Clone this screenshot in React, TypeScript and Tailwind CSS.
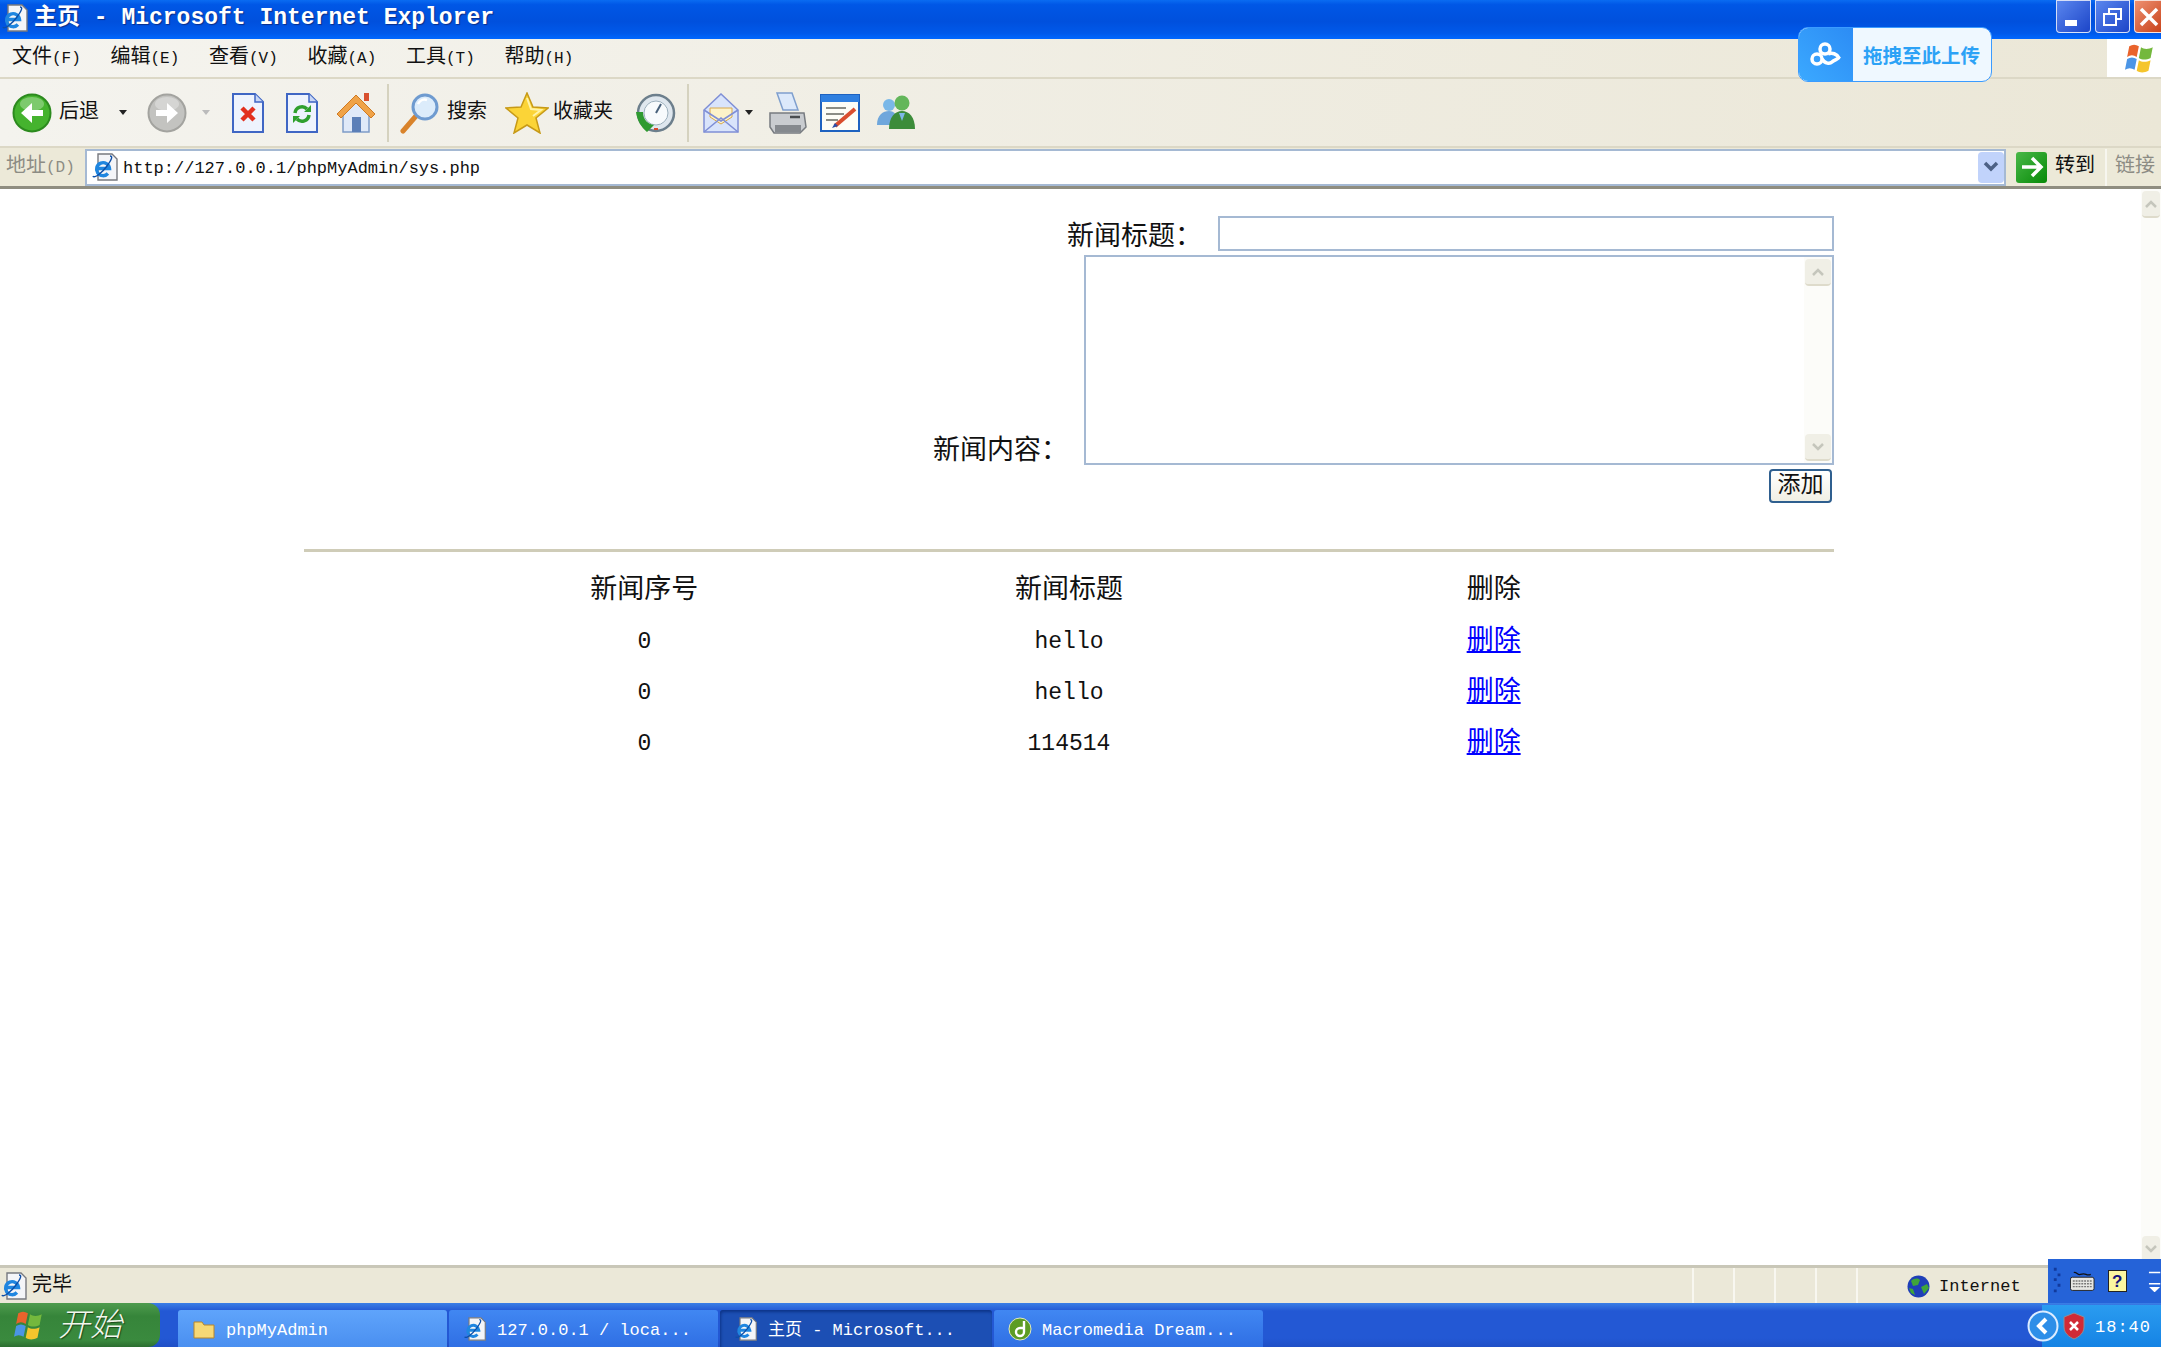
const CJK = "font-['Liberation_Mono','Noto_Sans_CJK_SC',monospace]";

function ArrowOrb({ color, dark, flip }: { color: string; dark: string; flip?: boolean }) {
  return (
    <svg width="40" height="40" viewBox="0 0 40 40" aria-hidden>
      <circle cx="20" cy="20" r="18.5" fill={color} stroke={dark} strokeWidth="2" />
      <ellipse cx="20" cy="11" rx="12" ry="7" fill="#fff" opacity="0.3" />
      <path
        d={flip ? 'M9 17h11v-7l11 10-11 10v-7H9z' : 'M31 17H20v-7L9 20l11 10v-7h11z'}
        fill="#fff"
      />
    </svg>
  );
}

function DocIcon({ children }: { children: React.ReactNode }) {
  return (
    <svg width="34" height="40" viewBox="0 0 34 40" aria-hidden>
      <path d="M2 1h22l8 8v30H2z" fill="#eef3fd" stroke="#3f66c4" strokeWidth="2" />
      <path d="M24 1v8h8" fill="#c8d6f5" stroke="#3f66c4" strokeWidth="1.5" />
      {children}
    </svg>
  );
}

function IeDoc({ size = 28 }: { size?: number }) {
  return (
    <svg width={size} height={size} viewBox="0 0 28 28" aria-hidden>
      <path d="M7 1h14l5 5v21H7z" fill="#f4f5f8" stroke="#77797f" strokeWidth="1.4" />
      <path
        d="M6 15.5h12.5a6.5 6.5 0 1 0-1.6 5"
        fill="none"
        stroke="#1f86e0"
        strokeWidth="3.4"
      />
      <path d="M2 23c1 3 9-3 14-10s6-10 3-10" fill="none" stroke="#0d4fa8" strokeWidth="1.4" />
    </svg>
  );
}

function HomeIcon() {
  return (
    <svg width="40" height="42" viewBox="0 0 40 42" aria-hidden>
      <path d="M7 20v20h26V20L20 8z" fill="#dfe9f8" stroke="#7f9cc8" strokeWidth="1.5" />
      <path d="M1 22 20 3l19 19-4 4L20 11 5 26z" fill="#f0a348" stroke="#cf7a22" strokeWidth="1" />
      <rect x="28" y="1" width="5" height="8" fill="#d8502e" />
      <rect x="16" y="25" width="9" height="15" fill="#5b7fb8" />
    </svg>
  );
}

function SearchIcon() {
  return (
    <svg width="42" height="42" viewBox="0 0 42 42" aria-hidden>
      <path d="M4 39 17 24" stroke="#d9832b" strokeWidth="5" strokeLinecap="round" />
      <circle cx="26" cy="15" r="12" fill="#dcecfb" stroke="#6f9bd0" strokeWidth="3" />
      <path d="M19 12c2-4 6-5 9-4" fill="none" stroke="#fff" strokeWidth="2.5" />
    </svg>
  );
}

function StarIcon() {
  return (
    <svg width="44" height="42" viewBox="0 0 44 42" aria-hidden>
      <path
        d="M22 1l6 14 15 1-12 10 4 15-13-8-13 8 4-15L1 16l15-1z"
        fill="#fbd437"
        stroke="#c79a18"
        strokeWidth="1.5"
      />
      <path d="M22 6l4 11 10 1-8 6" fill="none" stroke="#fff3a8" strokeWidth="2" />
    </svg>
  );
}

function HistoryIcon() {
  return (
    <svg width="42" height="42" viewBox="0 0 42 42" aria-hidden>
      <circle cx="22" cy="21" r="18" fill="#dfe7ee" stroke="#6d7f8c" strokeWidth="2.5" />
      <circle cx="22" cy="21" r="12" fill="#f7fafc" stroke="#9db0bd" />
      <path d="M22 21l5-9" stroke="#47607a" strokeWidth="2" />
      <path d="M2 20h7c0 8 5 12 11 13l-7 7C7 35 3 28 2 20z" fill="#2f9a30" />
      <path d="M20 37h4" stroke="#d9472b" strokeWidth="2" />
    </svg>
  );
}

function MailIcon() {
  return (
    <svg width="36" height="40" viewBox="0 0 36 40" aria-hidden>
      <path d="M1 17 18 1l17 16v22H1z" fill="#d9e4fb" stroke="#7f8fd6" strokeWidth="1.5" />
      <path d="M7 15h22v9l-11 7-11-7z" fill="#fdf3c9" stroke="#d8a84c" />
      <path d="M1 39l17-14 17 14M1 17l17 11 17-11" fill="none" stroke="#7f8fd6" strokeWidth="1.5" />
    </svg>
  );
}

function PrinterIcon() {
  return (
    <svg width="40" height="42" viewBox="0 0 40 42" aria-hidden>
      <path d="M9 1h15l6 17H15z" fill="#dce9fb" stroke="#7f9fce" strokeWidth="1.5" />
      <path d="M2 21h34l2 14-6 6H6l-4-6z" fill="#c9ccd0" stroke="#777b80" strokeWidth="1.5" />
      <path d="M7 33h26v7H7z" fill="#85898e" />
      <path d="M22 25h10" stroke="#4a4d51" strokeWidth="2.5" />
    </svg>
  );
}

function EditIcon() {
  return (
    <svg width="40" height="38" viewBox="0 0 40 38" aria-hidden>
      <rect x="1" y="1" width="38" height="36" fill="#fdfdf6" stroke="#1e62c0" strokeWidth="2" />
      <rect x="1" y="1" width="38" height="7" fill="#2f7fe0" />
      <path d="M6 14h20M6 20h18M6 26h12" stroke="#8b8d85" strokeWidth="2" />
      <path d="M15 32 35 15" stroke="#d94e2e" strokeWidth="4" />
      <path d="M12 34l3-5 3 3z" fill="#2a4fa8" />
    </svg>
  );
}

function MessengerIcon() {
  return (
    <svg width="42" height="36" viewBox="0 0 42 36" aria-hidden>
      <circle cx="14" cy="10" r="6" fill="#7ab8e8" />
      <path d="M2 30c0-10 6-14 12-14s8 4 8 14z" fill="#6fa7dc" />
      <circle cx="27" cy="8" r="7.5" fill="#63b65a" />
      <path d="M14 34c0-12 6-18 13-18s13 6 13 18z" fill="#3c8c3a" />
      <path d="M24 18l3 8 3-8" fill="#7fb8e6" />
    </svg>
  );
}

function XpFlag({ size }: { size: number }) {
  return (
    <svg width={size} height={size} viewBox="0 0 30 30" aria-hidden>
      <path d="M4 4c3-2 6-2 9 0l-2 10c-3-2-6-2-9 0z" fill="#e9632c" />
      <path d="M15 5c3 2 7 2 11 0l-2 10c-4 2-8 2-11 0z" fill="#74b83d" />
      <path d="M2 16c3-2 6-2 9 0l-2 10c-3-2-6-2-9 0z" fill="#4b95e6" />
      <path d="M13 17c3 2 7 2 11 0l-2 10c-4 2-8 2-11 0z" fill="#f5c52d" />
    </svg>
  );
}

function ScrollButton({ up, h = 'h-[27px]' }: { up?: boolean; h?: string }) {
  return (
    <div
      className={`flex ${h} w-full items-center justify-center rounded-sm border-b-2 border-[#dedbcb] bg-[#f0efe6]`}
    >
      <svg width="14" height="10" viewBox="0 0 14 10" aria-hidden>
        <path
          d={up ? 'M2 8l5-5 5 5' : 'M2 2l5 5 5-5'}
          fill="none"
          stroke="#c5c6bc"
          strokeWidth="2.5"
        />
      </svg>
    </div>
  );
}

function Scrollbar({ width }: { width: string }) {
  return (
    <div className={`flex ${width} shrink-0 flex-col justify-between bg-[#fcfcf9] px-px py-0.5`}>
      <ScrollButton up />
      <ScrollButton />
    </div>
  );
}

function MenuItem({ label, letter }: { label: string; letter: string }) {
  return (
    <div className="w-[98.5px] shrink-0 whitespace-nowrap text-[20px] text-[#111]">
      {label}
      <span className="text-[16px]">({letter})</span>
    </div>
  );
}

function TaskButton({
  icon,
  label,
  active,
  light,
  width,
}: {
  icon: React.ReactNode;
  label: string;
  active?: boolean;
  light?: boolean;
  width: string;
}) {
  const bg = active
    ? 'bg-[#1c4fb4] shadow-[inset_1px_2px_3px_#0d3488]'
    : light
      ? 'bg-[linear-gradient(#5fa4fb,#4a8ff0)]'
      : 'bg-[linear-gradient(#4187f2,#2f6fe4)]';
  return (
    <div
      className={`flex h-[37px] ${width} items-center gap-2.5 overflow-hidden rounded-t-[3px] pl-[14px] ${bg} whitespace-nowrap text-[17px] text-white`}
    >
      {icon}
      <span className="pt-1">{label}</span>
    </div>
  );
}

const rows = [
  ['0', 'hello'],
  ['0', 'hello'],
  ['0', '114514'],
];

export default function App() {
  return (
    <div className={`flex h-[1347px] w-[2161px] flex-col overflow-hidden bg-white ${CJK}`}>
      {/* title bar */}
      <div className="flex h-[39px] shrink-0 items-start justify-between bg-[linear-gradient(#0a6cf2,#0057e6_12%,#0050dd_55%,#0059ea_85%,#0068ff)]">
        <div className="flex items-center gap-[5px] pl-px pt-[3px] text-[23px] font-bold leading-[30px] text-white [text-shadow:1px_1px_1px_#0a2f8a]">
          <IeDoc />
          主页 - Microsoft Internet Explorer
        </div>
        <div className="flex gap-1">
          <div className="flex h-[33px] w-[35px] items-end justify-start rounded-b-[4px] border border-white/80 bg-[linear-gradient(135deg,#5a86ee,#1c45c8)] pb-[6px] pl-2">
            <div className="h-1.5 w-3 bg-white" />
          </div>
          <div className="flex h-[33px] w-[35px] items-center justify-center rounded-b-[4px] border border-white/80 bg-[linear-gradient(135deg,#5a86ee,#1c45c8)]">
            <svg width="20" height="20" viewBox="0 0 20 20" aria-hidden>
              <rect x="1" y="7" width="12" height="11" fill="none" stroke="#fff" strokeWidth="2" />
              <path d="M6 6V2h12v10h-4" fill="none" stroke="#fff" strokeWidth="2" />
            </svg>
          </div>
          <div className="flex h-[33px] w-[27px] items-center justify-start rounded-bl-[4px] border border-r-0 border-white/80 bg-[linear-gradient(135deg,#ee9070,#c9441c)] pl-1">
            <svg width="20" height="20" viewBox="0 0 20 20" aria-hidden>
              <path d="M2 2l16 16M18 2 2 18" stroke="#fff" strokeWidth="3.5" />
            </svg>
          </div>
        </div>
      </div>

      {/* menu bar */}
      <div className="flex h-[40px] shrink-0 items-center justify-between border-b-2 border-[#dcd8c6] bg-[linear-gradient(90deg,#f5f4ef,#ebe7d7)] pl-3">
        <div className="flex">
          <MenuItem label="文件" letter="F" />
          <MenuItem label="编辑" letter="E" />
          <MenuItem label="查看" letter="V" />
          <MenuItem label="收藏" letter="A" />
          <MenuItem label="工具" letter="T" />
          <MenuItem label="帮助" letter="H" />
        </div>
        <div className="flex h-[38px] w-[54px] items-center bg-white pl-[18px]">
          <XpFlag size={32} />
        </div>
      </div>

      {/* toolbar */}
      <div className="flex h-[69px] shrink-0 items-center border-b-2 border-[#dcd8c6] bg-[linear-gradient(90deg,#f4f3ee,#ebe7d7)] pl-3 text-[20px] text-[#111]">
        <ArrowOrb color="#45b32e" dark="#2c8a1e" />
        <span className="ml-[7px] w-[42px]">后退</span>
        <span className="ml-[18px] h-0 w-0 border-x-[4px] border-t-[5px] border-x-transparent border-t-[#222]" />
        <div className="ml-[20px] flex">
          <ArrowOrb color="#c3c3c0" dark="#a3a39f" flip />
        </div>
        <span className="ml-[15px] h-0 w-0 border-x-[4px] border-t-[5px] border-x-transparent border-t-[#bbb]" />
        <div className="ml-[21px] flex">
          <DocIcon>
            <path d="M11 15l12 12M23 15 11 27" stroke="#e2301f" strokeWidth="4.5" />
          </DocIcon>
        </div>
        <div className="ml-[20px] flex">
          <DocIcon>
            <path d="M10 20a7 7 0 0 1 12-4" fill="none" stroke="#2fa02f" strokeWidth="3.5" />
            <path d="M24 22a7 7 0 0 1-12 4" fill="none" stroke="#2fa02f" strokeWidth="3.5" />
            <path d="M19 19h7v-7zM15 23H8v7z" fill="#2fa02f" />
          </DocIcon>
        </div>
        <div className="ml-[17px] flex">
          <HomeIcon />
        </div>
        <div className="ml-[11px] h-[58px] w-0.5 bg-[#d5d2bf]" />
        <div className="ml-[10px] flex">
          <SearchIcon />
        </div>
        <span className="ml-[6px]">搜索</span>
        <div className="ml-[18px] flex">
          <StarIcon />
        </div>
        <span className="ml-[4px]">收藏夹</span>
        <div className="ml-[21px] flex">
          <HistoryIcon />
        </div>
        <div className="ml-[11px] h-[58px] w-0.5 bg-[#d5d2bf]" />
        <div className="ml-[14px] flex">
          <MailIcon />
        </div>
        <span className="ml-[6px] h-0 w-0 border-x-[4px] border-t-[5px] border-x-transparent border-t-[#222]" />
        <div className="ml-[15px] flex">
          <PrinterIcon />
        </div>
        <div className="ml-[12px] flex">
          <EditIcon />
        </div>
        <div className="ml-[15px] flex">
          <MessengerIcon />
        </div>
      </div>

      {/* address bar */}
      <div className="flex h-[41px] shrink-0 items-center border-b-[3px] border-[#8f8d80] bg-[#ece9d8]">
        <span className="w-[85px] shrink-0 whitespace-nowrap pl-1.5 text-[20px] text-[#8c8c84]">
          地址<span className="text-[16px]">(D)</span>
        </span>
        <div className="flex h-[37px] w-[1921px] shrink-0 items-center border-2 border-[#a5b9d3] bg-white pl-1">
          <IeDoc />
          <span className="ml-[4px] flex-1 pt-[3px] text-[17px] text-[#111]">
            http://127.0.0.1/phpMyAdmin/sys.php
          </span>
          <div className="flex h-[31px] w-[26px] items-center justify-center rounded-sm bg-[#c1d3fb]">
            <svg width="16" height="12" viewBox="0 0 16 12" aria-hidden>
              <path d="M2 2l6 6 6-6" fill="none" stroke="#4d6185" strokeWidth="3.5" />
            </svg>
          </div>
        </div>
        <div className="ml-[10px] flex h-[31px] w-[31px] items-center justify-center rounded-[3px] bg-[linear-gradient(135deg,#49b848,#078a07)]">
          <svg width="24" height="22" viewBox="0 0 24 22" aria-hidden>
            <path d="M2 11h18M12 2l9 9-9 9" fill="none" stroke="#fff" strokeWidth="3.5" />
          </svg>
        </div>
        <span className="ml-2 w-[50px] text-[20px] text-[#111]">转到</span>
        <div className="h-[37px] w-0.5 bg-[#f7f6ef]" />
        <span className="ml-2 overflow-hidden whitespace-nowrap text-[20px] text-[#8c8c84]">
          链接
        </span>
      </div>

      {/* page */}
      <div className="flex min-h-0 flex-1">
        <main className="min-w-0 flex-1 text-[27px] leading-[30px] text-[#111]">
          <div className="ml-[304px] w-[1530px] pt-[27px]">
            <div className="flex items-end justify-end">
              <label className="mr-[16px] leading-[26px]">新闻标题：</label>
              <input className="h-[35px] w-[616px] border-2 border-[#a5b9d3] bg-white" />
            </div>
            <div className="mt-1 flex items-end justify-end">
              <label className="mr-[16px] leading-[26px]">新闻内容：</label>
              <div className="flex h-[210px] w-[750px] border-2 border-[#a5b9d3] bg-white">
                <textarea className="flex-1 resize-none outline-none" />
                <Scrollbar width="w-[28px]" />
              </div>
            </div>
            <div className="mt-1 flex justify-end pr-0.5">
              <button
                type="button"
                className="h-[34px] w-[63px] rounded-[4px] border-2 border-[#2f5f8f] bg-[linear-gradient(#ffffff,#f0efe4)] text-[23px] leading-none"
              >
                添加
              </button>
            </div>
            <hr className="mt-[46px] h-[3px] border-0 bg-[#cfccb8]" />
            <table className="mx-auto mt-[13px] w-[1274px] table-fixed text-center">
              <thead>
                <tr className="h-[51px]">
                  <th className="font-normal">新闻序号</th>
                  <th className="font-normal">新闻标题</th>
                  <th className="font-normal">删除</th>
                </tr>
              </thead>
              <tbody>
                {rows.map((r, i) => (
                  <tr key={i} className="h-[51px]">
                    <td className="text-[23px]">{r[0]}</td>
                    <td className="text-[23px]">{r[1]}</td>
                    <td>
                      <a href="#" className="text-[#0000ff] underline">
                        删除
                      </a>
                    </td>
                  </tr>
                ))}
              </tbody>
            </table>
          </div>
        </main>
        <Scrollbar width="w-[20px]" />
      </div>

      {/* status bar */}
      <div className="relative flex h-[38px] shrink-0 items-center border-t-[3px] border-[#c9c7b8] bg-[#ebe8d8] text-[20px] text-[#111]">
        <IeDoc />
        <span className="ml-1">完毕</span>
        <div className="ml-auto mr-[264px] flex h-full">
          {[0, 1, 2, 3, 4].map((i) => (
            <div key={i} className="h-full w-[41px] border-l-2 border-[#f8f7f0]" />
          ))}
        </div>
        <div className="absolute left-[1907px] top-[6px] flex items-center gap-[9px] text-[17px]">
          <svg width="23" height="23" viewBox="0 0 23 23" aria-hidden>
            <circle cx="11.5" cy="11.5" r="11" fill="#1f3fb8" />
            <path d="M4 6c3-3 7-3 9-1l-2 5-5 1zM14 12l6-3 2 4-5 6zM2 13l4 1 2 6-4-2z" fill="#3fa53a" />
          </svg>
          Internet
        </div>
        {/* language bar */}
        <div className="absolute bottom-0 right-0 flex h-[44px] w-[113px] items-center overflow-hidden bg-[#2563d8] pl-[3px]">
          <svg width="12" height="32" viewBox="0 0 12 32" aria-hidden>
            <path d="M3 2h3v3H3zM7 8h3v3H7zM3 13h3v3H3zM7 19h3v3H7zM3 25h3v3H3z" fill="#123a9c" />
          </svg>
          <svg width="26" height="22" viewBox="0 0 26 22" className="ml-[8px]" aria-hidden>
            <path d="M4 2c3-1 4 3 7 2s4-1 6 0 3 1 5 0" fill="none" stroke="#111" strokeWidth="1.3" />
            <rect x="0.5" y="7" width="25" height="14" rx="2" fill="#e6e6e2" stroke="#222" />
            <path d="M3 11h20M3 14h20M3 17h20" stroke="#777" strokeWidth="1.5" strokeDasharray="2 1" />
          </svg>
          <div className="ml-[13px] flex h-[22px] w-[20px] items-center justify-center border border-[#222] bg-[#fbf6a0] font-['Liberation_Sans',sans-serif] text-[17px] font-bold leading-none text-[#12127a]">
            ?
          </div>
          <svg width="14" height="22" viewBox="0 0 14 22" className="ml-[21px]" aria-hidden>
            <path d="M1 2h12M1 14h12M3 18h8l-4 4z" fill="#fff" stroke="#fff" strokeWidth="1.5" />
          </svg>
        </div>
      </div>

      {/* taskbar */}
      <div className="flex h-[44px] shrink-0 items-end bg-[linear-gradient(#3b7fe6,#2358d4_18%,#2358d4_80%,#1f4fc6)]">
        <div className="flex h-[44px] w-[160px] items-center gap-3 rounded-r-[12px] bg-[linear-gradient(#4e9b4e,#36853a_30%,#3a8a3e_85%,#2c6e30)] pl-[14px] text-[32px] font-light italic leading-none text-[#f3f7ee] [text-shadow:1px_1px_1px_#1c4a1c]">
          <XpFlag size={32} />
          <span className="pt-1.5">开始</span>
        </div>
        <div className="ml-[18px] flex gap-[2px]">
          <TaskButton
            light
            width="w-[269px]"
            label="phpMyAdmin"
            icon={
              <svg width="24" height="24" viewBox="0 0 24 24" aria-hidden>
                <path d="M2 5h8l2 3h10v13H2z" fill="#f6d876" stroke="#b8862a" />
              </svg>
            }
          />
          <TaskButton width="w-[269px]" label="127.0.0.1 / loca..." icon={<IeDoc size={24} />} />
          <TaskButton active width="w-[272px]" label="主页 - Microsoft..." icon={<IeDoc size={24} />} />
          <TaskButton
            width="w-[269px]"
            label="Macromedia Dream..."
            icon={
              <svg width="24" height="24" viewBox="0 0 24 24" aria-hidden>
                <circle cx="12" cy="12" r="11" fill="#5d9c23" stroke="#dfe8c0" />
                <path d="M16 4v11a4 4 0 1 1-4-4h4" fill="none" stroke="#fff" strokeWidth="2.4" />
              </svg>
            }
          />
        </div>
        <div className="ml-auto flex h-[42px] w-[119px] items-center bg-[linear-gradient(#2a9cf0,#1583e4)]">
          <svg width="32" height="32" viewBox="0 0 32 32" className="-ml-[15px]" aria-hidden>
            <circle cx="16" cy="16" r="14.5" fill="#2d8ee8" stroke="#dcecff" strokeWidth="2" />
            <path d="M19 9l-7 7 7 7" fill="none" stroke="#fff" strokeWidth="4" />
          </svg>
          <svg width="24" height="28" viewBox="0 0 24 28" className="ml-[3px]" aria-hidden>
            <path d="M12 1l10 4v10c0 6-5 10-10 12C7 25 2 21 2 15V5z" fill="#d12a36" stroke="#8c8f9a" />
            <path d="M8 10l8 8M16 10l-8 8" stroke="#fff" strokeWidth="2.5" />
          </svg>
          <span className="ml-[9px] pt-1 text-[17px] tracking-[1px] text-white">18:40</span>
        </div>
      </div>

      {/* baidu drag upload overlay */}
      <div className="absolute left-[1798px] top-[27px] flex h-[55px] w-[194px] items-center overflow-hidden rounded-[10px] border border-[#3b9bff] bg-[#eff8ff]">
        <div className="flex h-full w-[54px] items-center justify-center bg-[linear-gradient(45deg,#3ba9ff,#2c8cf5)]">
          <svg width="32" height="26" viewBox="0 0 32 26" aria-hidden>
            <circle cx="15" cy="7" r="5" fill="none" stroke="#fff" strokeWidth="3.5" />
            <circle cx="7" cy="17" r="5" fill="none" stroke="#fff" strokeWidth="3.5" />
            <path d="M12 17c3 5 8 5 10 3s7-3 7-5" fill="none" stroke="#fff" strokeWidth="3.5" />
            <path d="M18 12c4-2 9 0 11 4" fill="none" stroke="#fff" strokeWidth="3.5" />
          </svg>
        </div>
        <span className="ml-[10px] whitespace-nowrap font-['Noto_Sans_CJK_SC',sans-serif] text-[19.5px] font-bold text-[#2ca2f6]">
          拖拽至此上传
        </span>
      </div>
    </div>
  );
}
